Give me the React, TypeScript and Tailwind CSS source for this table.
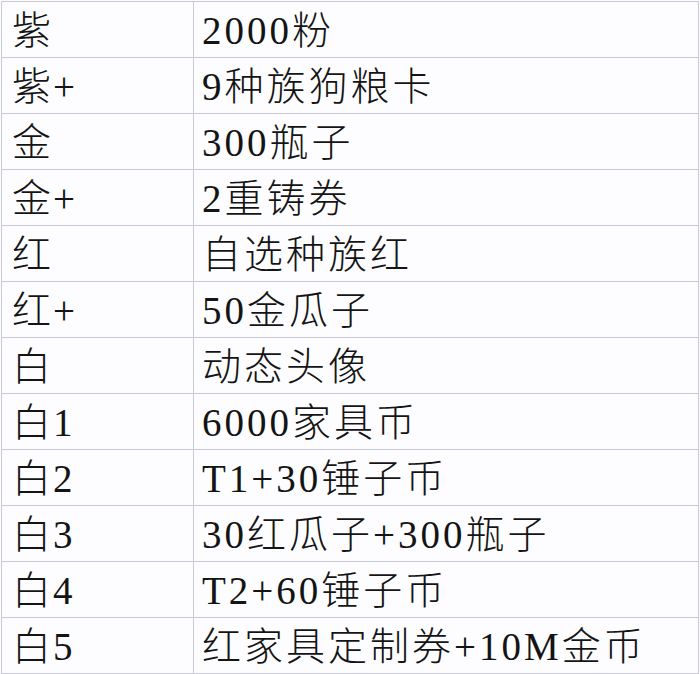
const rows: [string, string][] = [
  ["紫", "2000粉"],
  ["紫+", "9种族狗粮卡"],
  ["金", "300瓶子"],
  ["金+", "2重铸券"],
  ["红", "自选种族红"],
  ["红+", "50金瓜子"],
  ["白", "动态头像"],
  ["白1", "6000家具币"],
  ["白2", "T1+30锤子币"],
  ["白3", "30红瓜子+300瓶子"],
  ["白4", "T2+60锤子币"],
  ["白5", "红家具定制券+10M金币"],
];

export default function App() {
  return (
    <div className="w-[700px] h-[674px] bg-[#fdfdff] pt-px pl-px overflow-hidden">
      <div
        className="w-[698px] border-t border-l border-[#c9c9d8] text-[#141414] font-light"
        style={{ fontFamily: '"Liberation Serif", "Noto Sans CJK SC", serif' }}
      >
        {rows.map(([a, b]) => (
          <div key={a} className="flex h-[56px]">
            <div className="w-[192px] border-r border-b border-[#c9c9d8] flex items-center pl-[10px] pt-[2px] text-[39px] tracking-[2px] leading-none">
              {a}
            </div>
            <div className="flex-1 border-r border-b border-[#c9c9d8] flex items-center pl-[8px] pt-[2px] text-[39px] tracking-[3px] leading-none">
              {b}
            </div>
          </div>
        ))}
      </div>
    </div>
  );
}
